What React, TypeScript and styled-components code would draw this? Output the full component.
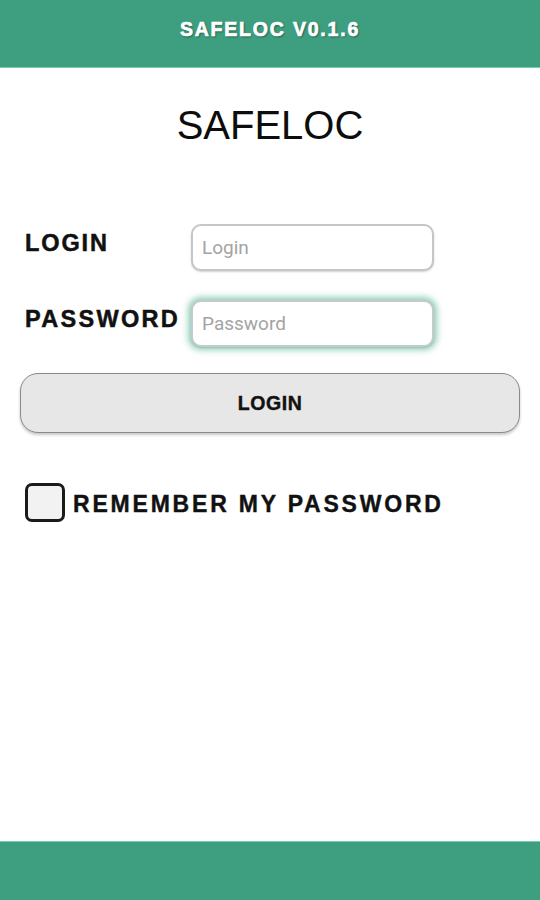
import React from "react";
import styled, { createGlobalStyle } from "styled-components";

const GlobalStyle = createGlobalStyle`
    html, body {
        margin: 0;
        padding: 0;
        background: #fff;
    }
    body {
        font-family: "Liberation Sans", Arial, sans-serif;
        color: #111;
    }
    * {
        box-sizing: border-box;
    }
`;

const Page = styled.div`
    display: flex;
    flex-direction: column;
    height: 100vh;
    min-height: 900px;
    background: #fff;
`;

const TopBar = styled.header`
    height: 68px;
    display: flex;
    justify-content: center;
    align-items: flex-start;
    padding-top: 19px;
    background-color: #3d9f80;
    border-bottom: 1px solid #74cdb4;
`;

const TopTitle = styled.h1`
    margin: 0;
    font-size: 19.5px;
    line-height: 20px;
    font-weight: 700;
    letter-spacing: 1.8px;
    color: #fff;
    -webkit-text-stroke: 0.7px #fff;
    text-shadow: 1px 1px 2px rgba(0, 0, 0, 0.5);
`;

const Main = styled.main`
    flex: 1;
    display: flex;
    flex-direction: column;
    padding: 0 20px;
`;

const AppName = styled.h2`
    margin: 37px 0 0;
    text-align: center;
    font-size: 40px;
    line-height: 40px;
    font-weight: 400;
    color: #0d0d0d;
`;

const Form = styled.form`
    display: flex;
    flex-direction: column;
    margin-top: 79px;
`;

const FieldRow = styled.div`
    display: flex;
    align-items: flex-start;
    padding-left: 5px;
    margin-bottom: 29px;
`;

const Label = styled.label<{ $spacing: number }>`
    width: 166px;
    margin-top: 7px;
    font-size: 23.5px;
    line-height: 24px;
    font-weight: 700;
    letter-spacing: ${(p) => p.$spacing}px;
    color: #111;
    -webkit-text-stroke: 0.5px #111;
    white-space: nowrap;
`;

const Input = styled.input<{ $glow?: boolean }>`
    width: 243px;
    height: 47px;
    padding: 0 9px;
    border: 2px solid ${(p) => (p.$glow ? "#c4ccc9" : "#c6c6c6")};
    border-radius: 10px;
    background: #fff;
    font-family: Roboto, "Liberation Sans", sans-serif;
    font-size: 19px;
    color: #333;
    outline: none;
    box-shadow: ${(p) =>
        p.$glow
            ? "0 0 6px 3px rgba(61, 170, 135, 0.55), 0 1px 2px rgba(0, 0, 0, 0.15)"
            : "0 1px 2px rgba(0, 0, 0, 0.18)"};

    &::placeholder {
        color: #a3a3a3;
    }
`;

const LoginButton = styled.button`
    height: 60px;
    width: 100%;
    margin-top: -3px;
    border: 1.5px solid #8a8a8a;
    border-radius: 18px;
    background: #e7e7e7;
    box-shadow: 0 2px 3px rgba(0, 0, 0, 0.22);
    font-family: "Liberation Sans", Arial, sans-serif;
    font-size: 19.5px;
    font-weight: 700;
    letter-spacing: 0.6px;
    color: #111;
    -webkit-text-stroke: 0.4px #111;
    cursor: pointer;
`;

const RememberRow = styled.label`
    display: flex;
    align-items: center;
    gap: 8px;
    margin-top: 50px;
    padding-left: 5px;
    cursor: pointer;
`;

const CheckBox = styled.span`
    width: 40px;
    height: 39px;
    border: 3px solid #1a1a1a;
    border-radius: 7px;
    background: #f2f2f2;
    flex-shrink: 0;
`;

const RememberText = styled.span`
    font-size: 23px;
    line-height: 24px;
    font-weight: 700;
    letter-spacing: 2.8px;
    color: #111;
    -webkit-text-stroke: 0.4px #111;
    padding-top: 2px;
`;

const BottomBar = styled.footer`
    height: 59px;
    background-color: #3d9f80;
    border-top: 1px solid #74cdb4;
`;

const App = () => {
    return (
        <Page>
            <GlobalStyle />
            <TopBar>
                <TopTitle>SAFELOC V0.1.6</TopTitle>
            </TopBar>

            <Main>
                <AppName>SAFELOC</AppName>

                <Form onSubmit={(e) => e.preventDefault()}>
                    <FieldRow>
                        <Label htmlFor="login" $spacing={1.9}>LOGIN</Label>
                        <Input id="login" type="text" placeholder="Login" />
                    </FieldRow>
                    <FieldRow>
                        <Label htmlFor="password" $spacing={2.3}>PASSWORD</Label>
                        <Input id="password" type="password" placeholder="Password" $glow />
                    </FieldRow>

                    <LoginButton type="submit">LOGIN</LoginButton>

                    <RememberRow>
                        <CheckBox />
                        <RememberText>REMEMBER MY PASSWORD</RememberText>
                    </RememberRow>
                </Form>
            </Main>

            <BottomBar />
        </Page>
    );
};

export default App;
